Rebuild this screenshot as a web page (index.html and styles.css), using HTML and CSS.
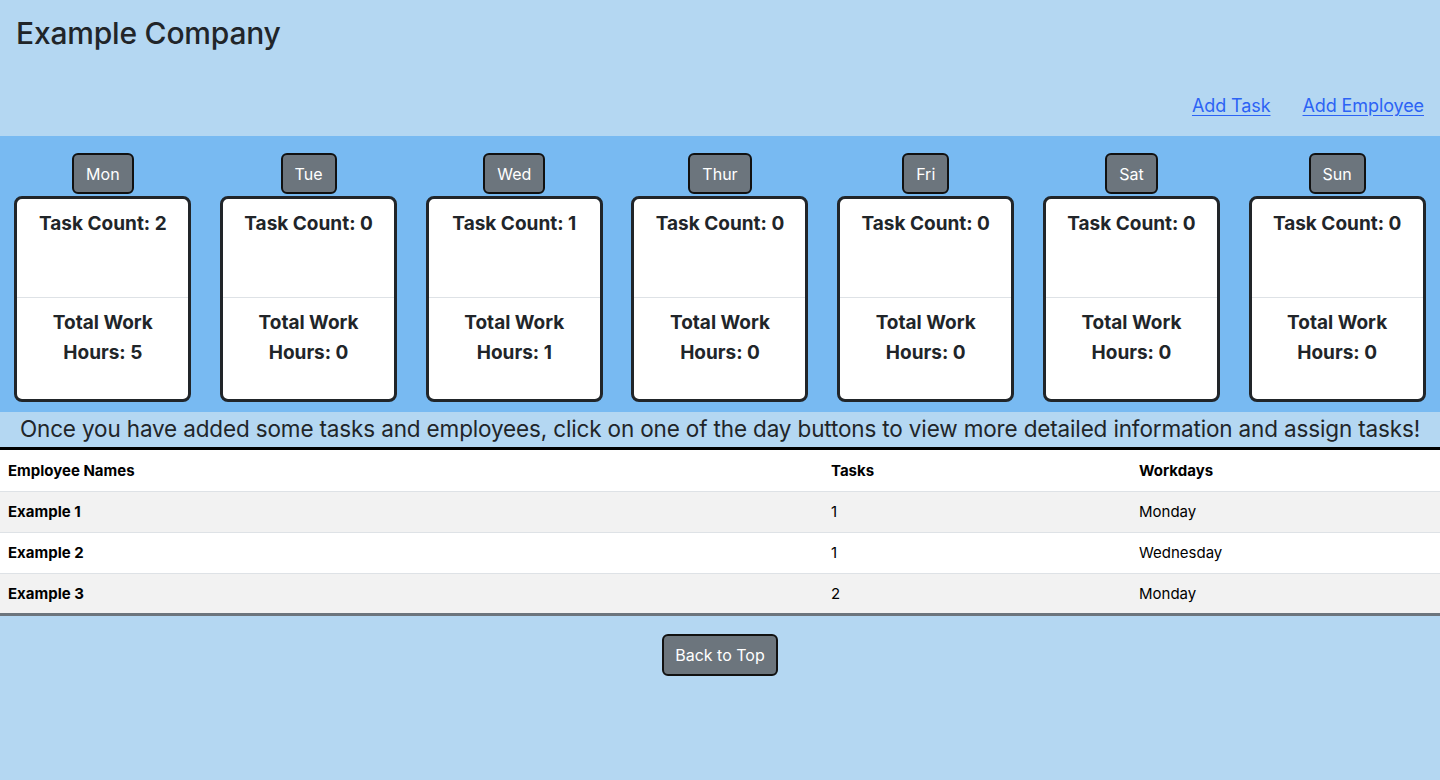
FILE: index.html
```html
<!DOCTYPE html>
<html lang="en">
<head>
<meta charset="utf-8">
<title>Example Company</title>
<link rel="stylesheet" href="styles.css">
</head>
<body>
<header class="top">
  <h1 class="brand">Example Company</h1>
  <nav class="links">
    <a href="#">Add Task</a>
    <a href="#">Add Employee</a>
  </nav>
</header>

<section class="week">
  <div class="day">
    <button class="btn">Mon</button>
    <div class="card">
      <div class="card-top">Task Count: 2</div>
      <div class="card-bottom">Total Work<br>Hours: 5</div>
    </div>
  </div>
  <div class="day">
    <button class="btn">Tue</button>
    <div class="card">
      <div class="card-top">Task Count: 0</div>
      <div class="card-bottom">Total Work<br>Hours: 0</div>
    </div>
  </div>
  <div class="day">
    <button class="btn">Wed</button>
    <div class="card">
      <div class="card-top">Task Count: 1</div>
      <div class="card-bottom">Total Work<br>Hours: 1</div>
    </div>
  </div>
  <div class="day">
    <button class="btn">Thur</button>
    <div class="card">
      <div class="card-top">Task Count: 0</div>
      <div class="card-bottom">Total Work<br>Hours: 0</div>
    </div>
  </div>
  <div class="day">
    <button class="btn">Fri</button>
    <div class="card">
      <div class="card-top">Task Count: 0</div>
      <div class="card-bottom">Total Work<br>Hours: 0</div>
    </div>
  </div>
  <div class="day">
    <button class="btn">Sat</button>
    <div class="card">
      <div class="card-top">Task Count: 0</div>
      <div class="card-bottom">Total Work<br>Hours: 0</div>
    </div>
  </div>
  <div class="day">
    <button class="btn">Sun</button>
    <div class="card">
      <div class="card-top">Task Count: 0</div>
      <div class="card-bottom">Total Work<br>Hours: 0</div>
    </div>
  </div>
</section>

<p class="hint">Once you have added some tasks and employees, click on one of the day buttons to view more detailed information and assign tasks!</p>

<table class="staff">
  <colgroup>
    <col class="c1"><col class="c2"><col class="c3">
  </colgroup>
  <thead>
    <tr><th>Employee Names</th><th>Tasks</th><th>Workdays</th></tr>
  </thead>
  <tbody>
    <tr class="odd"><th>Example 1</th><td>1</td><td>Monday</td></tr>
    <tr><th>Example 2</th><td>1</td><td>Wednesday</td></tr>
    <tr class="odd"><th>Example 3</th><td>2</td><td>Monday</td></tr>
  </tbody>
</table>

<div class="footer">
  <button class="btn btn-top">Back to Top</button>
</div>
</body>
</html>
```

FILE: styles.css
```css
* { box-sizing: border-box; }

html, body {
  margin: 0;
  padding: 0;
  background: #b4d7f2;
  font-family: Inter, "Liberation Sans", sans-serif;
  color: #212529;
}

.top {
  height: 136px;
  padding: 14px 16px 0 16px;
  display: flex;
  flex-direction: column;
}

.brand {
  margin: 0;
  font-size: 30px;
  font-weight: 500;
  line-height: 38px;
  letter-spacing: -0.2px;
}

.links {
  margin-top: 42px;
  display: flex;
  justify-content: flex-end;
  gap: 32px;
}

.links a {
  color: #2c63f5;
  font-size: 18px;
  line-height: 24px;
  letter-spacing: -0.1px;
  text-decoration: underline;
  text-underline-offset: 3px;
}

.week {
  background: #78baf2;
  height: 276px;
  display: grid;
  grid-template-columns: repeat(7, 1fr);
  padding-top: 17px;
}

.day {
  display: flex;
  flex-direction: column;
  align-items: center;
}

.btn {
  font-family: Inter, "Liberation Sans", sans-serif;
  background: #6c757d;
  color: #fff;
  border: 2px solid #111;
  border-radius: 6px;
  font-size: 16px;
  height: 41px;
  padding: 0 12px;
  cursor: pointer;
}

.card {
  margin-top: 2px;
  width: 177px;
  height: 206px;
  background: #fff;
  border: 3px solid #212529;
  border-radius: 8px;
  display: flex;
  flex-direction: column;
  font-weight: 700;
  font-size: 19px;
  text-align: center;
}

.card-top {
  height: 99px;
  padding-top: 13px;
  line-height: 24px;
  border-bottom: 1px solid #dee2e6;
}

.card-bottom {
  padding-top: 10px;
  line-height: 30px;
}

.hint {
  margin: 0;
  font-size: 22.5px;
  letter-spacing: -0.15px;
  line-height: 33px;
  text-align: center;
  white-space: nowrap;
  border-bottom: 3px solid #000;
  height: 38px;
}

.staff {
  width: 100%;
  border-collapse: collapse;
  background: #fff;
  color: #000;
  font-size: 15px;
  border-bottom: 3px solid #6c757d;
}

.c1 { width: 823px; }
.c2 { width: 308px; }

.staff th,
.staff td {
  text-align: left;
  padding: 0 8px;
  height: 41px;
  border-bottom: 1px solid #dee2e6;
}

.staff th { font-weight: 700; }
.staff td { font-weight: 400; }

.staff tr.odd { background: #f2f2f2; }

.footer {
  display: flex;
  justify-content: center;
  padding-top: 18px;
}

.btn-top {
  height: 42px;
  width: 116px;
  padding: 0;
}
```
